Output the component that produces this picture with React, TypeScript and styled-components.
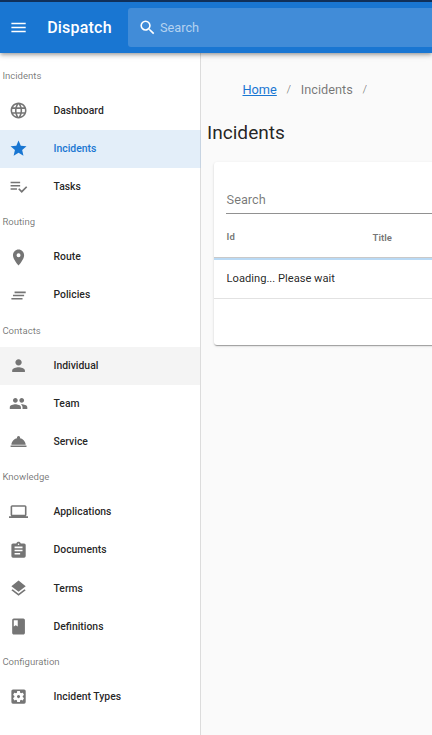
import React from "react";
import styled, { createGlobalStyle } from "styled-components";
import {
  MdAssignment,
  MdClass,
  MdClearAll,
  MdLanguage,
  MdLaptop,
  MdLayers,
  MdMenu,
  MdPeople,
  MdPerson,
  MdRoom,
  MdRoomService,
  MdSearch,
  MdSettingsApplications,
  MdStar,
} from "react-icons/md";

const GlobalStyle = createGlobalStyle`
  * { box-sizing: border-box; }
  body {
    margin: 0;
    background: #fafafa;
    font-family: Roboto, "Liberation Sans", sans-serif;
    color: rgba(0, 0, 0, 0.87);
    overflow: hidden;
  }
`;

const Page = styled.div`
  display: flex;
  flex-direction: column;
  height: 735px;
  overflow: hidden;
`;

const AppBar = styled.header`
  position: relative;
  z-index: 2;
  flex: none;
  display: flex;
  align-items: center;
  height: 53px;
  padding-left: 8.7px;
  background: #1976d2;
  border-top: 2px solid #10305a;
  color: #fff;
  box-shadow: 0 2px 3px -1px rgba(0, 0, 0, 0.2), 0 3px 4px rgba(0, 0, 0, 0.14),
    0 1px 8px rgba(0, 0, 0, 0.12);

  svg {
    flex: none;
    width: 19.1px;
    height: 19.1px;
  }
`;

const Brand = styled.div`
  width: 81px;
  margin-left: 19.4px;
  font-size: 16px;
  font-weight: 500;
  letter-spacing: 0.2px;
`;

const HeaderSearch = styled.div`
  flex: 1;
  display: flex;
  align-items: center;
  gap: 3.2px;
  height: 39px;
  padding-left: 9.5px;
  border-radius: 3px 0 0 3px;
  background: #418cd8;
  font-size: 12.75px;

  span {
    color: #b4d2f0;
  }
`;

const Body = styled.div`
  flex: 1;
  display: flex;
  min-height: 0;
`;

const Drawer = styled.nav`
  flex: none;
  width: 201px;
  padding-top: 6.8px;
  background: #fff;
  border-right: 1px solid #dcdcdc;
`;

const Subheader = styled.div`
  display: flex;
  align-items: center;
  height: 32px;
  padding: 0 0 1px 2.4px;
  font-size: 9.56px;
  color: rgba(0, 0, 0, 0.54);
`;

const NavItem = styled.a<{ $state?: "active" | "hover" }>`
  display: flex;
  align-items: center;
  gap: 25.6px;
  height: 38.2px;
  margin-right: ${(p) => (p.$state === "active" ? "-1px" : "0")};
  padding: 0 0 1.4px 8.8px;
  font-size: 10.4px;
  font-weight: 500;
  color: ${(p) => (p.$state === "active" ? "#1976d2" : "rgba(0, 0, 0, 0.87)")};
  background: ${(p) =>
    p.$state === "active" ? "#e3eef9" : p.$state === "hover" ? "#f4f4f4" : "transparent"};
  border-right: ${(p) => (p.$state === "active" ? "1px solid #c7d4e2" : "0")};

  svg {
    flex: none;
    width: 19.1px;
    height: 19.1px;
    margin-top: 0.6px;
    color: ${(p) => (p.$state === "active" ? "#1976d2" : "#757575")};
  }
`;

const Content = styled.main`
  flex: 1;
  min-width: 0;
  overflow: hidden;
`;

const Breadcrumbs = styled.div`
  display: flex;
  align-items: center;
  height: 20px;
  margin: 26px 0 0 41.5px;
  font-size: 12.75px;
  color: rgba(0, 0, 0, 0.54);

  a {
    color: #1976d2;
    text-decoration: underline;
  }
`;

const Separator = styled.span`
  width: 24px;
  text-align: center;
  font-size: 11.15px;
  color: rgba(0, 0, 0, 0.45);
`;

const Title = styled.h1`
  margin: 21px 0 0 6px;
  font-size: 19.1px;
  line-height: 25px;
  font-weight: 400;
`;

const Card = styled.section`
  width: 320px;
  height: 183px;
  margin: 17px 0 0 13px;
  padding-top: 28px;
  border-radius: 3px;
  background: #fff;
  box-shadow: 0 2px 1px -1px rgba(0, 0, 0, 0.2), 0 1px 1px rgba(0, 0, 0, 0.14),
    0 1px 3px rgba(0, 0, 0, 0.12);
`;

const SearchField = styled.div`
  height: 24px;
  margin-left: 12px;
  padding-left: 0.6px;
  border-bottom: 1px solid #919191;
  font-size: 12.75px;
  line-height: 20px;
  color: rgba(0, 0, 0, 0.54);
`;

const HeadRow = styled.div`
  display: grid;
  grid-template-columns: 146px 1fr;
  align-items: center;
  height: 44px;
  padding: 2px 0 0 12.6px;
  border-bottom: 1px solid #c9c9c9;
  font-size: 9.56px;
  font-weight: 700;
  color: rgba(0, 0, 0, 0.54);
`;

const HeadCell = styled.span<{ $drop?: boolean }>`
  padding-top: ${(p) => (p.$drop ? "2px" : "0")};
`;

const ProgressBar = styled.div`
  height: 2px;
  background: #badaf5;
`;

const LoadingRow = styled.div`
  height: 39px;
  padding-left: 12.6px;
  border-bottom: 1px solid #e2e2e2;
  font-size: 11.15px;
  line-height: 37px;
`;

const PlaylistCheckIcon = () => (
  <svg viewBox="0 0 24 24" fill="currentColor">
    <path d="M14 10H2v2h12v-2zM14 6H2v2h12V6zM2 16h8v-2H2v2zM21.5 11.5L23 13l-7 7-4.5-4.5L13 14l3 3 5.5-5.5z" />
  </svg>
);

type Item = { label: string; icon: React.ComponentType; state?: "active" | "hover" };

const groups: { title: string; items: Item[] }[] = [
  {
    title: "Incidents",
    items: [
      { label: "Dashboard", icon: MdLanguage },
      { label: "Incidents", icon: MdStar, state: "active" },
      { label: "Tasks", icon: PlaylistCheckIcon },
    ],
  },
  {
    title: "Routing",
    items: [
      { label: "Route", icon: MdRoom },
      { label: "Policies", icon: MdClearAll },
    ],
  },
  {
    title: "Contacts",
    items: [
      { label: "Individual", icon: MdPerson, state: "hover" },
      { label: "Team", icon: MdPeople },
      { label: "Service", icon: MdRoomService },
    ],
  },
  {
    title: "Knowledge",
    items: [
      { label: "Applications", icon: MdLaptop },
      { label: "Documents", icon: MdAssignment },
      { label: "Terms", icon: MdLayers },
      { label: "Definitions", icon: MdClass },
    ],
  },
  {
    title: "Configuration",
    items: [{ label: "Incident Types", icon: MdSettingsApplications }],
  },
];

export default function App() {
  return (
    <Page>
      <GlobalStyle />
      <AppBar>
        <MdMenu />
        <Brand>Dispatch</Brand>
        <HeaderSearch>
          <MdSearch />
          <span>Search</span>
        </HeaderSearch>
      </AppBar>
      <Body>
        <Drawer>
          {groups.map((group) => (
            <React.Fragment key={group.title}>
              <Subheader>{group.title}</Subheader>
              {group.items.map(({ label, icon: Icon, state }) => (
                <NavItem key={label} $state={state}>
                  <Icon />
                  <span>{label}</span>
                </NavItem>
              ))}
            </React.Fragment>
          ))}
        </Drawer>
        <Content>
          <Breadcrumbs>
            <a>Home</a>
            <Separator>/</Separator>
            <span>Incidents</span>
            <Separator>/</Separator>
          </Breadcrumbs>
          <Title>Incidents</Title>
          <Card>
            <SearchField>Search</SearchField>
            <HeadRow>
              <HeadCell>Id</HeadCell>
              <HeadCell $drop>Title</HeadCell>
            </HeadRow>
            <ProgressBar />
            <LoadingRow>Loading... Please wait</LoadingRow>
          </Card>
        </Content>
      </Body>
    </Page>
  );
}
